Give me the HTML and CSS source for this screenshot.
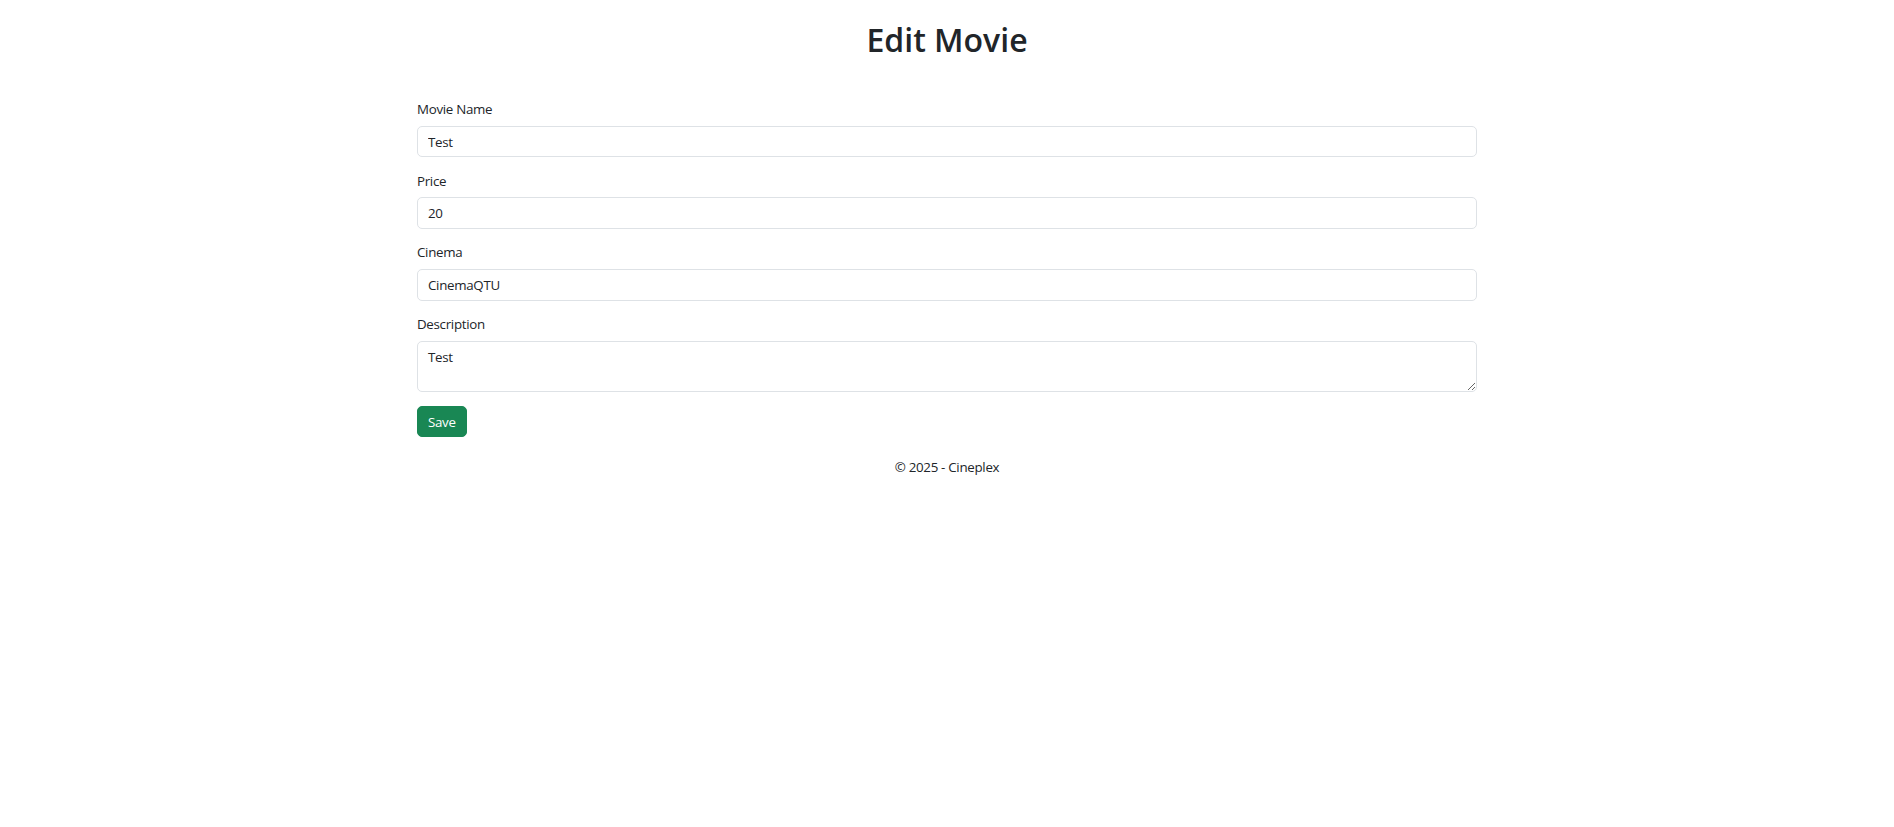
FILE: index.html
```html
<!DOCTYPE html>
<html lang="en">
<head>
<meta charset="utf-8">
<title>Edit Movie</title>
<link rel="stylesheet" href="styles.css">
</head>
<body>
<main class="container">
  <h1 class="title">Edit Movie</h1>
  <form class="movie-form">
    <div class="field">
      <label class="form-label" for="name">Movie Name</label>
      <input class="form-control" id="name" type="text" value="Test">
    </div>
    <div class="field">
      <label class="form-label" for="price">Price</label>
      <input class="form-control" id="price" type="text" value="20">
    </div>
    <div class="field">
      <label class="form-label" for="cinema">Cinema</label>
      <input class="form-control" id="cinema" type="text" value="CinemaQTU">
    </div>
    <div class="field">
      <label class="form-label" for="desc">Description</label>
      <textarea class="form-control textarea" id="desc" rows="2">Test</textarea>
    </div>
    <button class="btn-save" type="button">Save</button>
  </form>
  <footer class="footer">© 2025 - Cineplex</footer>
</main>
</body>
</html>
```
FILE: styles.css
```css
* { box-sizing: border-box; }
html, body { margin: 0; padding: 0; background: #fff; }
body {
  font-family: "Open Sans", "Noto Sans", sans-serif;
  font-size: 13.33px;
  line-height: 20px;
  letter-spacing: -0.3px;
  color: #212529;
}
.container {
  width: 1060px;
  margin: 0 auto;
  padding-top: 20px;
}
.title {
  margin: 0 0 39px;
  text-align: center;
  font-size: 32px;
  line-height: 40px;
  font-weight: 600;
  letter-spacing: 0;
}
.movie-form {
  display: flex;
  flex-direction: column;
  align-items: flex-start;
}
.field {
  width: 100%;
  display: flex;
  flex-direction: column;
  margin-bottom: 13.33px;
}
.form-label {
  display: block;
  margin-bottom: 6.67px;
}
.form-control {
  display: block;
  width: 100%;
  height: 31.7px;
  padding: 5px 10px;
  font-family: inherit;
  font-size: 13.33px;
  line-height: 20px;
  letter-spacing: -0.3px;
  color: #212529;
  background: #fff;
  border: 1px solid #dee2e6;
  border-radius: 5px;
  outline: none;
}
.textarea {
  height: 51.7px;
  resize: vertical;
}
.btn-save {
  height: 31.7px;
  padding: 5px 10px;
  font-family: inherit;
  font-size: 13.33px;
  line-height: 20px;
  letter-spacing: -0.3px;
  color: #fff;
  background: #198754;
  border: 1px solid #198754;
  border-radius: 5px;
}
.footer {
  margin-top: 20px;
  text-align: center;
}
```
